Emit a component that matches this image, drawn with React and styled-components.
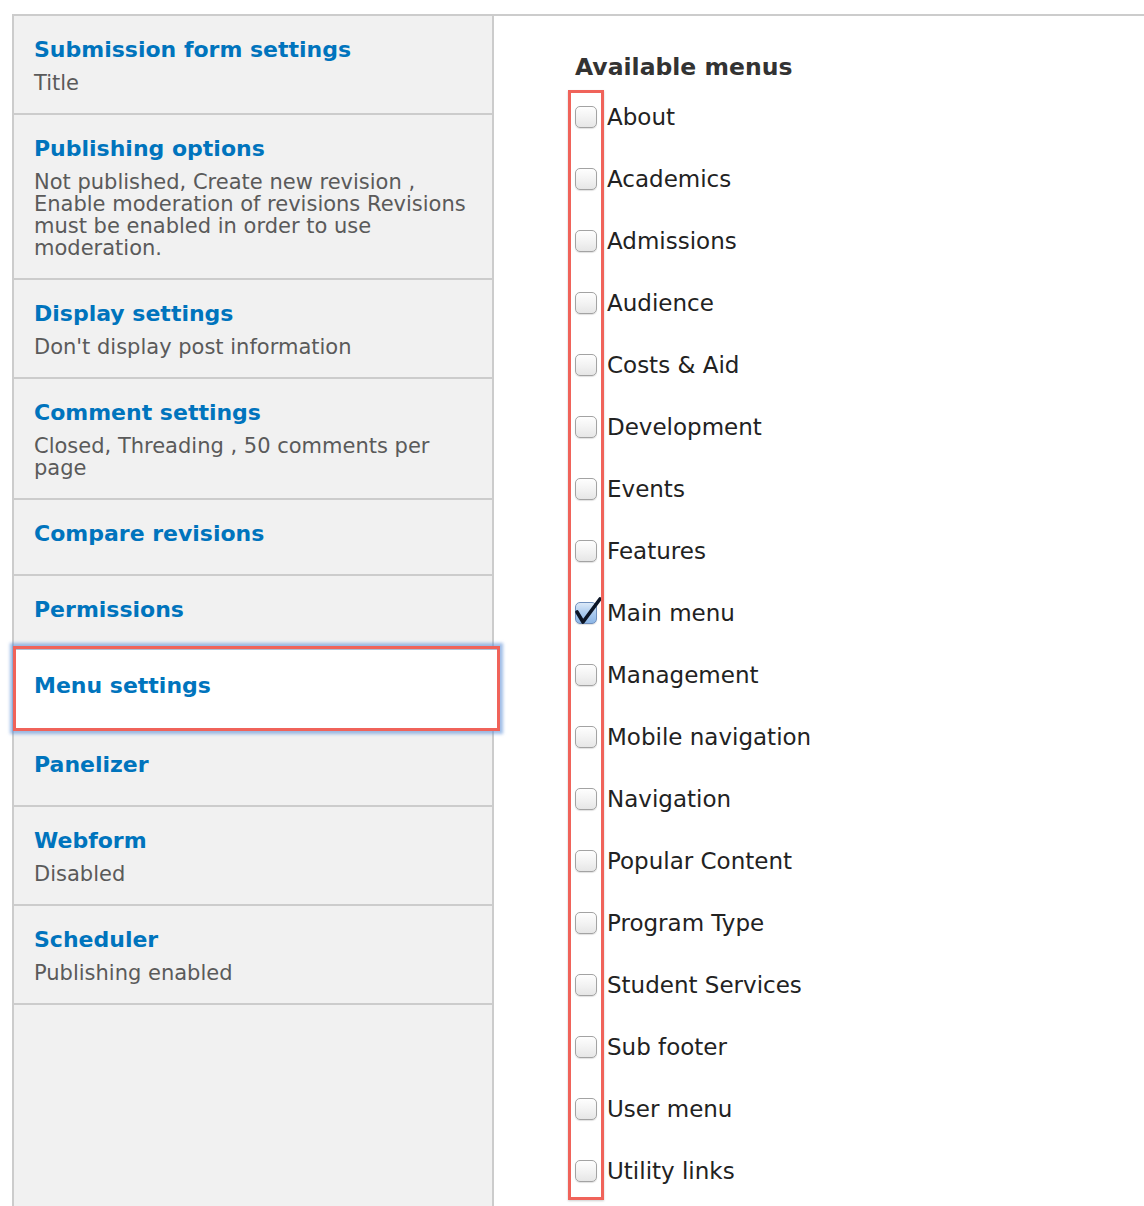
import React from 'react';
import styled, { createGlobalStyle } from 'styled-components';

const tabs = [
  { title: 'Submission form settings', summary: ['Title'] },
  {
    title: 'Publishing options',
    summary: [
      'Not published, Create new revision ,',
      'Enable moderation of revisions Revisions',
      'must be enabled in order to use',
      'moderation.',
    ],
  },
  { title: 'Display settings', summary: ["Don't display post information"] },
  { title: 'Comment settings', summary: ['Closed, Threading , 50 comments per', 'page'] },
  { title: 'Compare revisions', summary: [] },
  { title: 'Permissions', summary: [] },
  { title: 'Menu settings', summary: [], selected: true },
  { title: 'Panelizer', summary: [] },
  { title: 'Webform', summary: ['Disabled'] },
  { title: 'Scheduler', summary: ['Publishing enabled'] },
];

const menus = [
  'About', 'Academics', 'Admissions', 'Audience', 'Costs & Aid', 'Development',
  'Events', 'Features', 'Main menu', 'Management', 'Mobile navigation', 'Navigation',
  'Popular Content', 'Program Type', 'Student Services', 'Sub footer', 'User menu',
  'Utility links',
];

const GlobalStyle = createGlobalStyle`
  html, body {
    margin: 0;
    padding: 0;
    background: #fff;
    overflow: hidden;
  }
  body {
    font-family: "DejaVu Sans", Verdana, sans-serif;
  }
`;

const Page = styled.div`
  display: flex;
  margin: 14px 0 0 12px;
  border-top: 2px solid #ccc;
  height: 1192px;
  box-sizing: border-box;
`;

const TabList = styled.div`
  flex: none;
  width: 482px;
  box-sizing: border-box;
  background: #f1f1f1;
  border-left: 2px solid #ccc;
  border-right: 2px solid #ccc;
  display: flex;
  flex-direction: column;
`;

const Tab = styled.div`
  position: relative;
  padding: 20px 15px 19px 20px;
  border-bottom: 2px solid #ccc;

  &.selected {
    z-index: 1;
    margin: -6px -8px 0 -1px;
    padding: 23px 15px 21px 18px;
    background: #fff;
    border: 3px solid #f0635a;
    box-shadow: 0 0 3px 3px rgba(95, 145, 215, 0.6), inset 0 1px 0 rgba(80, 110, 160, 0.45);
  }
`;

const TabTitle = styled.div`
  font-size: 22px;
  line-height: 28px;
  font-weight: bold;
  color: #0074bd;
  white-space: nowrap;
`;

const Summary = styled.div`
  margin-top: ${p => (p.$empty ? '7px' : '8px')};
  font-size: 21px;
  line-height: 22px;
  color: #5a5a5a;
  white-space: nowrap;
`;

const Line = styled.span`
  display: block;
`;

const Content = styled.div`
  flex: 1;
  padding: 36px 0 0 81px;
`;

const Heading = styled.h3`
  margin: 0 0 4px;
  font-size: 23.5px;
  line-height: 30px;
  font-weight: bold;
  color: #333;
`;

const CheckList = styled.div`
  position: relative;
  display: flex;
  flex-direction: column;
`;

const Annotation = styled.span`
  position: absolute;
  left: -7px;
  top: 4px;
  bottom: 2px;
  width: 36px;
  box-sizing: border-box;
  border: 3px solid #f0635a;
  box-shadow: 0 1px 2px rgba(0, 0, 0, 0.2);
  pointer-events: none;
`;

const Row = styled.label`
  display: flex;
  align-items: center;
  height: 62px;
  font-size: 23px;
  color: #222;
`;

const Box = styled.span`
  position: relative;
  flex: none;
  width: 22px;
  height: 22px;
  margin-right: 10px;
  box-sizing: border-box;
  border-radius: 5px;
  border: 1px solid ${p => (p.$checked ? '#6f8fbd' : '#a3a3a3')};
  background: ${p =>
    p.$checked
      ? 'linear-gradient(#dbe9f8, #a9c9ee 55%, #8db6e6)'
      : 'linear-gradient(#fefefe, #f3f3f3 50%, #e6e6e6)'};
  box-shadow: 0 1px 1px rgba(0, 0, 0, 0.12);
`;

const Tick = styled.svg`
  position: absolute;
  left: -3px;
  top: -8px;
  overflow: visible;
`;

function CheckBox({ checked }) {
  return (
    <Box $checked={checked}>
      {checked && (
        <Tick width="30" height="32" viewBox="0 0 30 32">
          <path d="M4 17 L10 27 L27 4" fill="none" stroke="#0c1526" strokeWidth="3.6" strokeLinecap="round" strokeLinejoin="round" />
        </Tick>
      )}
    </Box>
  );
}

export default function App() {
  return (
    <>
      <GlobalStyle />
      <Page>
        <TabList>
          {tabs.map(tab => (
            <Tab key={tab.title} className={tab.selected ? 'selected' : undefined}>
              <TabTitle>{tab.title}</TabTitle>
              <Summary $empty={tab.summary.length === 0}>
                {tab.summary.map(line => <Line key={line}>{line}</Line>)}
              </Summary>
            </Tab>
          ))}
        </TabList>
        <Content>
          <Heading>Available menus</Heading>
          <CheckList>
            {menus.map(name => (
              <Row key={name}>
                <CheckBox checked={name === 'Main menu'} />
                {name}
              </Row>
            ))}
            <Annotation />
          </CheckList>
        </Content>
      </Page>
    </>
  );
}
